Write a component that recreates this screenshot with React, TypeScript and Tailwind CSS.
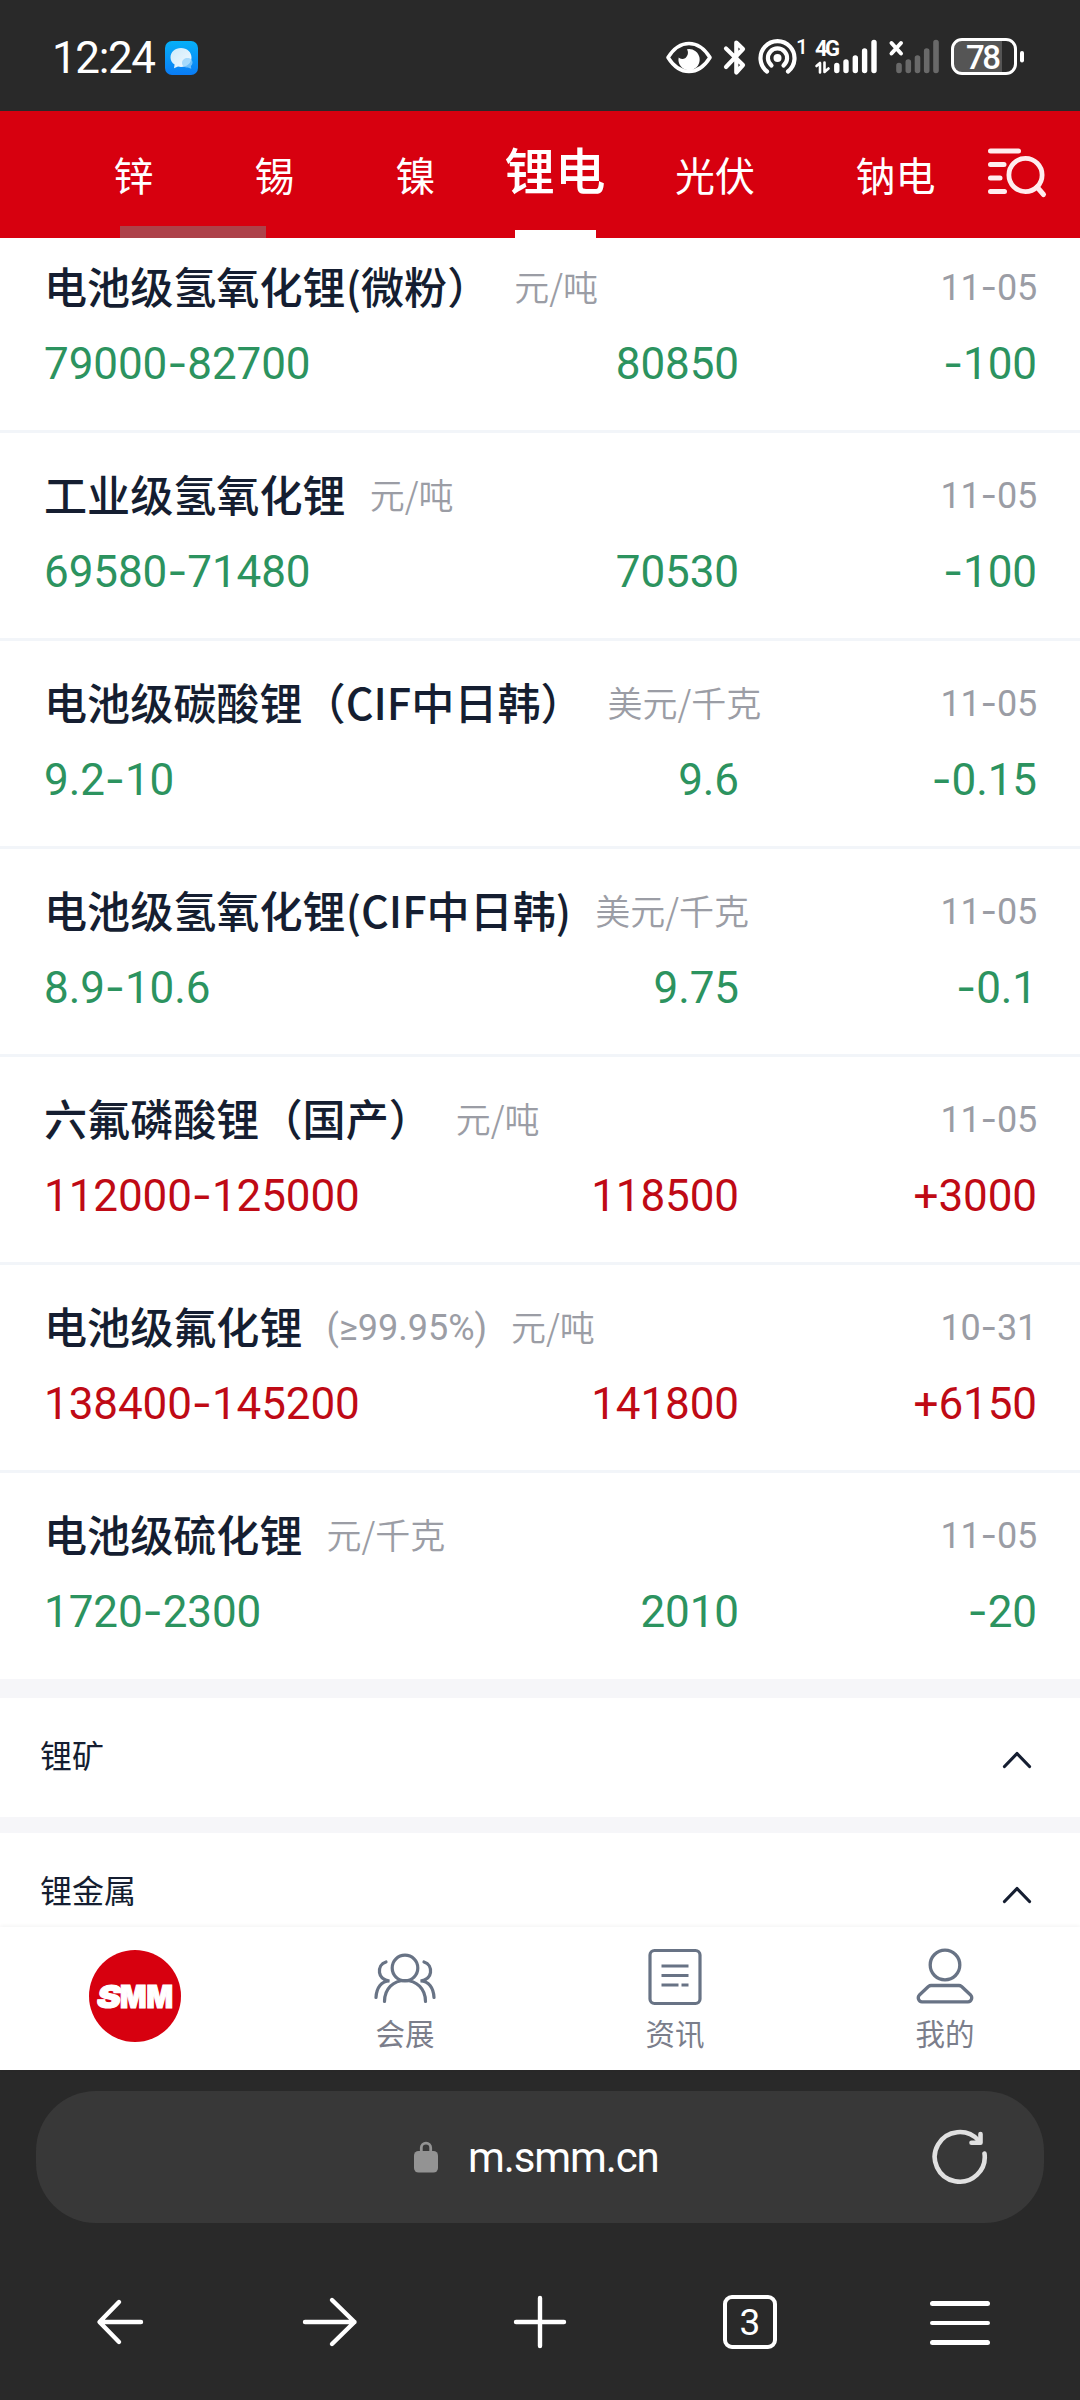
import React from 'react';

const NUM = "font-['Roboto','Noto_Sans_CJK_SC',sans-serif]";

type Quote = {
  name: string;
  spec?: string;
  unit: string;
  date: string;
  range: string;
  avg: string;
  change: string;
};

const quotes: Quote[] = [
  { name: '电池级氢氧化锂(微粉）', unit: '元/吨', date: '11-05', range: '79000-82700', avg: '80850', change: '-100' },
  { name: '工业级氢氧化锂', unit: '元/吨', date: '11-05', range: '69580-71480', avg: '70530', change: '-100' },
  { name: '电池级碳酸锂（CIF中日韩）', unit: '美元/千克', date: '11-05', range: '9.2-10', avg: '9.6', change: '-0.15' },
  { name: '电池级氢氧化锂(CIF中日韩)', unit: '美元/千克', date: '11-05', range: '8.9-10.6', avg: '9.75', change: '-0.1' },
  { name: '六氟磷酸锂（国产）', unit: '元/吨', date: '11-05', range: '112000-125000', avg: '118500', change: '+3000' },
  { name: '电池级氟化锂', spec: '(≥99.95%)', unit: '元/吨', date: '10-31', range: '138400-145200', avg: '141800', change: '+6150' },
  { name: '电池级硫化锂', unit: '元/千克', date: '11-05', range: '1720-2300', avg: '2010', change: '-20' },
];

/* Figures are set in Roboto; the hyphen comes from Inter, which has a wider one. */
function Figures({ text }: { text: string }) {
  const parts = text.split('-');
  return (
    <>
      {parts.map((p, i) => (
        <React.Fragment key={i}>
          {i > 0 && <span className="font-['Inter'] leading-[0]">-</span>}
          {p}
        </React.Fragment>
      ))}
    </>
  );
}

function StatusBar() {
  return (
    <div className="flex h-[111px] shrink-0 items-center bg-[#292929] pl-[52px] text-white">
      <span className={`${NUM} mt-[5px] w-[113px] text-[44px] leading-none tracking-[-1.4px]`}>12:24</span>
      <svg width="34" height="34" viewBox="0 0 34 34" className="mt-[4px]">
        <defs>
          <linearGradient id="msg" x1="0" y1="0" x2="0" y2="1">
            <stop offset="0" stopColor="#06b0f8" />
            <stop offset="1" stopColor="#0a7cf5" />
          </linearGradient>
          <linearGradient id="bubble" x1="0" y1="0" x2="1" y2="1">
            <stop offset="0" stopColor="#cdeafb" />
            <stop offset="1" stopColor="#f2f9fe" />
          </linearGradient>
        </defs>
        <rect width="33" height="34" rx="7" fill="url(#msg)" />
        <path d="M16 7c6 0 10.500 4 10.500 9.500S22 26 16 26l-3-.4-4 1.600.6-3.600C7 21.800 5.500 19.500 5.500 16.500 5.500 11 10 7 16 7z" fill="url(#bubble)" />
        <path d="M17 22c0-3 2.500-5 5.500-5s5 2 5 4.500c0 1.500-.6 2.600-1.600 3.500l.4 2.800-3.400-1.200C19.500 26.600 17 25 17 22z" fill="#8fd0fb" opacity=".75" />
      </svg>
      <svg width="364" height="44" viewBox="664 35 364 44" className="ml-auto mr-[52px] mt-[3px]">
        <path d="M668 57.500C674 48 681 43.500 689 43.500S704 48 710 57.500C704 67 697 71.500 689 71.500S674 67 668 57.500z" fill="none" stroke="#fff" strokeWidth="3.600" strokeLinejoin="round" />
        <path d="M687 49.300a10.600 10.600 0 1 1-8.300 8.200c1.300 1.600 4.500 2 6.800.4 2.600-2 3.200-5.600 1.500-8.600z" fill="#fff" />
        <path d="M726 48.500l17 16.500-6.700 7.500v-30l6.700 6.500L726 67" fill="none" stroke="#fff" strokeWidth="4.200" strokeLinecap="round" strokeLinejoin="round" />
        <g fill="none" stroke="#fff" strokeWidth="4.200" strokeLinecap="round">
          <path d="M767 71.500a17 17 0 1 1 21 0" />
          <path d="M771.500 65.500a9.600 9.600 0 1 1 12 0" />
        </g>
        <circle cx="777.500" cy="58" r="4" fill="#fff" />
        <text x="796" y="54" fill="#fff" className="font-['Roboto'] text-[21px] font-medium">1</text>
        <text x="815" y="56" fill="#fff" textLength="25" className="font-['Roboto'] text-[22px] font-bold">4G</text>
        <path d="M816.500 66l3.500-3v9.500M824.500 62.500V72l4-3.500" fill="none" stroke="#fff" strokeWidth="2.600" strokeLinecap="round" strokeLinejoin="round" />
        <g stroke="#fff" strokeWidth="5.400" strokeLinecap="round">
          <path d="M836.800 65.500v5M846 62v8.500M855.300 58v12.500M864.600 51v19.500M874 42.500v28" />
        </g>
        <path d="M891.500 43l9.500 10.500M901 43l-9.500 10.500" stroke="#fff" strokeWidth="4" strokeLinecap="round" />
        <g stroke="#696969" strokeWidth="5.600" strokeLinecap="round">
          <path d="M899 65.500v5M908.300 62v8.500M917.500 58v12.500M926.700 51v19.500M936 42.500v28" />
        </g>
        <path d="M962 39.500h40v34h-40c-6 0-9.500-3.500-9.500-9v-16c0-5.500 3.500-9 9.500-9z" fill="#555" />
        <rect x="952.500" y="39.500" width="63" height="34" rx="9.500" fill="none" stroke="#fff" strokeWidth="3" />
        <rect x="1020" y="51" width="4" height="11.500" rx="2" fill="#fff" />
        <text x="966" y="68.500" fill="#fff" textLength="35" className="font-['Roboto'] text-[33px] font-medium">78</text>
      </svg>
    </div>
  );
}

function Header() {
  const tab = 'flex shrink-0 items-center justify-center text-[40px] leading-none pb-[2px]';
  return (
    <header className="relative flex h-[127px] shrink-0 items-stretch bg-[#d7000f] pl-[63px] text-white">
      <div className={`${tab} w-[141px]`}>锌</div>
      <div className={`${tab} w-[141px]`}>锡</div>
      <div className={`${tab} w-[141px]`}>镍</div>
      <div className="relative flex w-[139px] shrink-0 items-center justify-center pr-px pb-[13px] text-[50.500px] leading-none font-medium">
        锂电
        <span className="absolute bottom-0 left-[29px] h-2 w-[81px] bg-white" />
      </div>
      <div className={`${tab} w-[180px]`}>光伏</div>
      <div className={`${tab} w-[181px]`}>钠电</div>
      <svg width="62" height="54" viewBox="986 146 62 54" className="mt-[35px]" fill="none" stroke="#ffecee" strokeLinecap="round">
        <path d="M990.500 151h28M990.500 164.500h13.500M990.500 178h9.500M990.500 191.500h14" strokeWidth="5" />
        <circle cx="1025.500" cy="175" r="16.600" strokeWidth="4.800" />
        <path d="M1037 187l6.500 7.500" strokeWidth="5" />
      </svg>
      <span className="absolute bottom-0 left-[120px] h-3 w-[146px] bg-[#ad424a]" />
    </header>
  );
}

function Row({ q, last }: { q: Quote; last: boolean }) {
  const color = q.change.startsWith('+') ? 'text-[#bf0a15]' : 'text-[#2c935f]';
  return (
    <div className={`flex flex-col pr-[43px] pl-[44px] pt-[33px] ${last ? 'h-[206px]' : 'h-[208px] border-b-3 border-[#f2f5f9]'}`}>
      <div className="flex h-[54px] shrink-0 items-center whitespace-nowrap">
        <span className="mt-px text-[43.100px] leading-none font-medium text-[#151e31]">{q.name}</span>
        {q.spec && <span className={`${NUM} ml-6 mt-[6px] text-[36px] leading-none text-[#9b9da5]`}>{q.spec}</span>}
        <span className="ml-6 text-[35px] leading-none font-[350] text-[#9b9da5]">{q.unit}</span>
        <span className={`${NUM} ml-auto mt-[6px] text-[36px] leading-none tracking-[-0.2px] text-[#9b9da5]`}>
          <Figures text={q.date} />
        </span>
      </div>
      <div className={`${NUM} mt-[25px] flex h-[54px] shrink-0 items-center text-[44px] leading-none tracking-[-0.1px] ${color}`}>
        <span className="w-[350px]"><Figures text={q.range} /></span>
        <span className="w-[345px] text-right">{q.avg}</span>
        <span className="flex-1 text-right"><Figures text={q.change} /></span>
      </div>
    </div>
  );
}

function Section({ title }: { title: string }) {
  return (
    <div className="flex h-[119px] shrink-0 items-center justify-between bg-white pr-[48px] pl-[40px]">
      <span className="-mt-[8px] text-[32px] leading-none text-[#151e31]">{title}</span>
      <svg width="30" height="20" viewBox="0 0 30 20" className="mt-[5px]" fill="none" stroke="#151e31" strokeWidth="3.200" strokeLinecap="round" strokeLinejoin="round">
        <path d="M2.500 16.500L15 3.500l12.500 13" />
      </svg>
    </div>
  );
}

function SmmTabBar() {
  const item = 'flex w-[270px] flex-col items-center';
  const label = 'mt-[11px] text-[29.500px] leading-none text-[#7b7e8b]';
  return (
    <nav className="relative flex h-[143px] shrink-0 bg-white pt-[20px] shadow-[0_-1px_4px_rgba(0,0,0,0.05)]">
      <div className={item}>
        <svg width="94" height="94" viewBox="0 0 94 94" className="mt-[2px]">
          <circle cx="47" cy="47" r="46" fill="#d7000f" />
          <g fill="#fff" stroke="#fff" strokeWidth="1.200" className="font-['Inter'] text-[32px] font-black">
            <text x="9" y="58.500" textLength="24" lengthAdjust="spacingAndGlyphs" className="italic">S</text>
            <text x="32" y="58.500" textLength="53" lengthAdjust="spacingAndGlyphs">MM</text>
          </g>
        </svg>
      </div>
      <div className={item}>
        <svg width="64" height="60" viewBox="373 1947 64 60" fill="none" stroke="#687385" strokeWidth="3.200" strokeLinecap="round">
          <circle cx="405" cy="1968" r="12.800" />
          <path d="M384.500 2001.500c0-13 9-21 20.500-21s20.500 8 20.500 21" />
          <path d="M386 1962c-5 1.500-7 6-6.500 10.500.5 4 3.500 7.500 10 8.500-8 0-13 6.500-13.500 16.500" />
          <path d="M424 1962c5 1.500 7 6 6.500 10.500-.5 4-3.500 7.500-10 8.500 8 0 13 6.500 13.500 16.500" />
        </svg>
        <span className={label}>会展</span>
      </div>
      <div className={item}>
        <svg width="60" height="60" viewBox="645 1947 60 60" fill="none" stroke="#687385" strokeWidth="3.200" strokeLinecap="round">
          <rect x="650" y="1950.500" width="50" height="53" rx="4.500" />
          <path d="M661.500 1966h27M661.500 1975.500h27M661.500 1985h17M681.500 1985h7" strokeLinecap="butt" />
        </svg>
        <span className={label}>资讯</span>
      </div>
      <div className={item}>
        <svg width="64" height="60" viewBox="913 1947 64 60" fill="none" stroke="#687385" strokeWidth="3.300" strokeLinejoin="round">
          <circle cx="945" cy="1965" r="14.800" />
          <path d="M931 1985.500h28c1 0 1.800.4 2.600 1l9 8.500c2.200 2.400 1 6.800-2.600 6.800h-46c-3.600 0-4.800-4.400-2.600-6.800l9-8.500c.8-.6 1.600-1 2.600-1z" />
        </svg>
        <span className={label}>我的</span>
      </div>
    </nav>
  );
}

function BrowserBar() {
  const cell = 'flex w-[210px] items-center justify-center';
  return (
    <div className="flex h-[330px] shrink-0 flex-col bg-[#292929] pt-[21px] text-white">
      <div className="mx-[36px] flex h-[132px] shrink-0 items-center rounded-[60px] bg-[#383838] pr-[55px] pl-[377px]">
        <svg width="26" height="32" viewBox="0 0 26 32" fill="none">
          <path d="M8.300 12V6.800a4.700 4.700 0 0 1 9.400 0V12" stroke="#939393" strokeWidth="2.800" />
          <rect x="1" y="10" width="24" height="21.500" rx="4.500" fill="#939393" />
        </svg>
        <span className={`${NUM} mt-[2px] ml-[29px] text-[42px] leading-none tracking-[-1.100px]`}>m.smm.cn</span>
        <svg width="58" height="58" viewBox="931 2128 58 58" className="ml-auto" fill="none" stroke="#e0e0e0" strokeWidth="4.600" strokeLinecap="round" strokeLinejoin="round">
          <path d="M984.500 2153.500a25 24.800 0 1 1-6-13" />
          <path d="M980.500 2134v8.800h-9" />
        </svg>
      </div>
      <div className="flex h-[177px] items-center px-[15px] pt-[21px]">
        <div className={cell}>
          <svg width="50" height="50" viewBox="96 2296 50 50" fill="none" stroke="#fff" strokeWidth="4.400" strokeLinecap="round" strokeLinejoin="round">
            <path d="M142 2321h-41M120 2301l-19.500 20 19.500 20" />
          </svg>
        </div>
        <div className={cell}>
          <svg width="58" height="54" viewBox="301 2295 58 54" fill="none" stroke="#fff" strokeWidth="4.400" strokeLinecap="round" strokeLinejoin="round">
            <path d="M305 2322h49.500M332 2300l22.500 22-22.500 22" />
          </svg>
        </div>
        <div className={cell}>
          <svg width="56" height="56" viewBox="512 2294 56 56" fill="none" stroke="#fff" strokeWidth="4.400" strokeLinecap="round">
            <path d="M516 2322h48M540 2298v48" />
          </svg>
        </div>
        <div className={cell}>
          <div className={`${NUM} flex size-[54px] items-center justify-center rounded-[9px] border-4 border-white text-[37px] leading-none`}>3</div>
        </div>
        <div className={cell}>
          <div className="mt-[2px] flex w-[60px] flex-col gap-[15px]">
            <span className="h-[4.500px] rounded-full bg-white" />
            <span className="h-[4.500px] rounded-full bg-white" />
            <span className="h-[4.500px] rounded-full bg-white" />
          </div>
        </div>
      </div>
    </div>
  );
}

export default function App() {
  return (
    <div className="flex h-[2400px] w-[1080px] flex-col overflow-hidden bg-white font-['Noto_Sans_CJK_SC',sans-serif]">
      <StatusBar />
      <Header />
      <main className="h-[1689px] shrink-0 overflow-hidden bg-[#f6f6f9]">
        <div className="-mt-[13px] flex flex-col">
          <div className="bg-white">
            {quotes.map((q, i) => (
              <Row key={q.name} q={q} last={i === quotes.length - 1} />
            ))}
          </div>
          <div className="mt-[19px] flex flex-col gap-4">
            <Section title="锂矿" />
            <Section title="锂金属" />
          </div>
        </div>
      </main>
      <SmmTabBar />
      <BrowserBar />
    </div>
  );
}
